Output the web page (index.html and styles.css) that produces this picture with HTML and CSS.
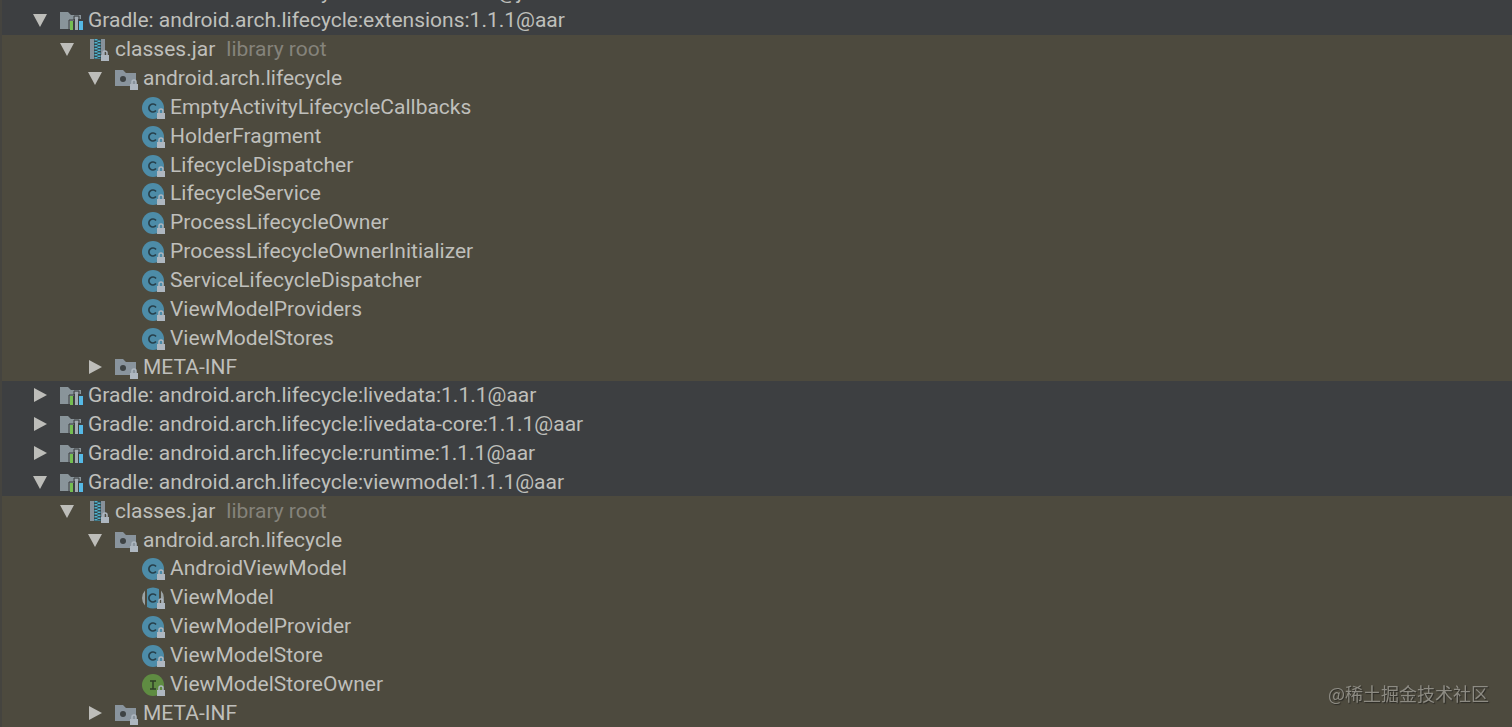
FILE: index.html
```
<!DOCTYPE html>
<html lang="en">
<head>
    <meta charset="UTF-8">
    <meta name="viewport" content="width=device-width, initial-scale=1.0">
    <title>External Libraries</title>
    <link rel="stylesheet" href="styles.css">
</head>
<body>
    <svg class="sprite" aria-hidden="true">
        <symbol id="open" viewBox="0 0 14 14"><path d="M0 1h14L7 14z" fill="#bdbdb9"/></symbol>
        <symbol id="closed" viewBox="0 0 14 14"><path d="M1 0v14l13-7z" fill="#bdbdb9"/></symbol>
        <symbol id="lock" viewBox="0 0 8 11">
            <path d="M2 6V3a2 2 0 0 1 4 0v3" fill="none" stroke="#aeb7c0" stroke-width="1.5"/>
            <path d="M0 5h8v6H0z" fill="#aeb7c0"/>
        </symbol>
        <symbol id="library" viewBox="0 0 24 22">
            <path d="M1 2h8l3 3h10v4h-7v2h-4v8H1z" fill="#89949a"/>
            <path d="M10 20V10h5V6h5v4h4" fill="none" stroke="#3d3f41" stroke-width="1"/>
            <path d="M11 11h3v9h-3z" fill="#75bd52"/>
            <path d="M16 7h3v13h-3z" fill="#a3abb2"/>
            <path d="M20 11h4v9h-4z" fill="#55b9e6"/>
        </symbol>
        <symbol id="jar" viewBox="0 0 24 22">
            <path d="M4 0h15v20H4z" fill="#87919a"/>
            <path d="M8 0h7v20H8z" fill="#35474c"/>
            <path d="M10 0v20" stroke="#4eb4cf" stroke-width="3" stroke-dasharray="1.5 1.5"/>
            <path d="M13 1.5v18.500" stroke="#4eb4cf" stroke-width="3" stroke-dasharray="1.5 1.5"/>
            <use href="#lock" x="15" y="11" width="8" height="11"/>
        </symbol>
        <symbol id="package" viewBox="0 0 24 22">
            <path d="M1 2h8l3 3h10v13H1z" fill="#89949d"/>
            <circle cx="9" cy="11" r="3" fill="#3e4344"/>
            <use href="#lock" x="16" y="11" width="8" height="11"/>
        </symbol>
        <symbol id="class" viewBox="0 0 24 22">
            <circle cx="12" cy="11" r="11" fill="#4d8ca8"/>
            <path d="M15 8.500a4 4 0 1 0 0 5" fill="none" stroke="#27404b" stroke-width="1.700"/>
            <use href="#lock" x="16" y="11" width="8" height="11"/>
        </symbol>
        <symbol id="abstract" viewBox="0 0 24 22">
            <path d="M4 3.500a11 11 0 0 0 0 15zM20 3.500a11 11 0 0 1 0 15z" fill="#9ba3a5"/>
            <path d="M6 2q6-3 12 0v18q-6 3-12 0z" fill="#4d8ca8"/>
            <path d="M15 8.500a4 4 0 1 0 0 5" fill="none" stroke="#27404b" stroke-width="1.700"/>
            <use href="#lock" x="16" y="11" width="8" height="11"/>
        </symbol>
        <symbol id="interface" viewBox="0 0 24 22">
            <circle cx="12" cy="11" r="11" fill="#5f8c42"/>
            <path d="M9 7h6M12 7v8M9 15h6" fill="none" stroke="#2e3d26" stroke-width="1.500"/>
            <use href="#lock" x="16" y="11" width="8" height="11"/>
        </symbol>
    </svg>

    <main class="tree" id="tree"></main>
    <div class="watermark">@稀土掘金技术社区</div>

    <script>
        const rows = [
            [0, 'open', 'library', 'Gradle: android.arch.lifecycle:extensions:1.1.1@aar'],
            [1, 'open', 'jar', 'classes.jar', 'library root'],
            [2, 'open', 'package', 'android.arch.lifecycle'],
            [3, '', 'class', 'EmptyActivityLifecycleCallbacks'],
            [3, '', 'class', 'HolderFragment'],
            [3, '', 'class', 'LifecycleDispatcher'],
            [3, '', 'class', 'LifecycleService'],
            [3, '', 'class', 'ProcessLifecycleOwner'],
            [3, '', 'class', 'ProcessLifecycleOwnerInitializer'],
            [3, '', 'class', 'ServiceLifecycleDispatcher'],
            [3, '', 'class', 'ViewModelProviders'],
            [3, '', 'class', 'ViewModelStores'],
            [2, 'closed', 'package', 'META-INF'],
            [0, 'closed', 'library', 'Gradle: android.arch.lifecycle:livedata:1.1.1@aar'],
            [0, 'closed', 'library', 'Gradle: android.arch.lifecycle:livedata-core:1.1.1@aar'],
            [0, 'closed', 'library', 'Gradle: android.arch.lifecycle:runtime:1.1.1@aar'],
            [0, 'open', 'library', 'Gradle: android.arch.lifecycle:viewmodel:1.1.1@aar'],
            [1, 'open', 'jar', 'classes.jar', 'library root'],
            [2, 'open', 'package', 'android.arch.lifecycle'],
            [3, '', 'class', 'AndroidViewModel'],
            [3, '', 'abstract', 'ViewModel'],
            [3, '', 'class', 'ViewModelProvider'],
            [3, '', 'class', 'ViewModelStore'],
            [3, '', 'interface', 'ViewModelStoreOwner'],
            [2, 'closed', 'package', 'META-INF']
        ];

        const tree = document.getElementById('tree');

        function addRow([level, arrow, icon, name, note], extra = '') {
            const row = document.createElement('div');
            row.className = `row level-${level} ${extra}`;
            const toggle = arrow
                ? `<button class="toggle" aria-label="Toggle ${name}"><svg class="arrow"><use href="#${arrow}"/></svg></button>`
                : '<span class="toggle"></span>';
            row.innerHTML = `
                ${toggle}
                <svg class="icon"><use href="#${icon}"/></svg>
                <span class="name">${name}</span>
                ${note ? `<span class="note">${note}</span>` : ''}
            `;
            tree.appendChild(row);
        }

        // the row above is scrolled almost out of view
        addRow([0, '', 'library', 'Gradle: android.arch.lifecycle:common:1.1.1@jar'], 'cut');
        rows.forEach(row => addRow(row));
    </script>
</body>
</html>
```
FILE: styles.css
```
body {
    margin: 0;
    background-color: #4d4a3e;
    color: #bfbfbb;
    font-family: Roboto, "Noto Sans CJK SC", sans-serif;
    font-size: 21px;
    line-height: 28px;
}
.sprite {
    display: none;
}
.tree {
    display: flex;
    flex-direction: column;
    min-height: 100vh;
    box-sizing: border-box;
    border-left: 2px solid #45443f;
}
.row {
    display: flex;
    flex: 1 0 28px;
    align-items: center;
    white-space: nowrap;
}
.level-0 {
    padding-left: 31px;
    background-color: #3d3f41;
}
.level-1 {
    padding-left: 58px;
}
.level-2 {
    padding-left: 86px;
}
.level-3 {
    padding-left: 113px;
}
.cut {
    flex: 0 0 6px;
    align-items: flex-end;
    overflow: hidden;
}
.cut .icon {
    margin-bottom: 4px;
}
.toggle {
    display: flex;
    width: 26px;
    padding: 0;
    border: none;
    background: none;
}
.arrow {
    width: 14px;
    height: 14px;
}
.icon {
    width: 24px;
    height: 22px;
    margin-top: 2px;
    margin-right: 5px;
    flex-shrink: 0;
}
.note {
    margin-left: 11px;
    color: #85837b;
}
.watermark {
    position: fixed;
    right: 23px;
    bottom: 20px;
    color: #8d8b83;
    font-family: "Noto Sans CJK SC", sans-serif;
    font-size: 18px;
    text-shadow: 1px 1px 1px #2b2a25;
}
```
